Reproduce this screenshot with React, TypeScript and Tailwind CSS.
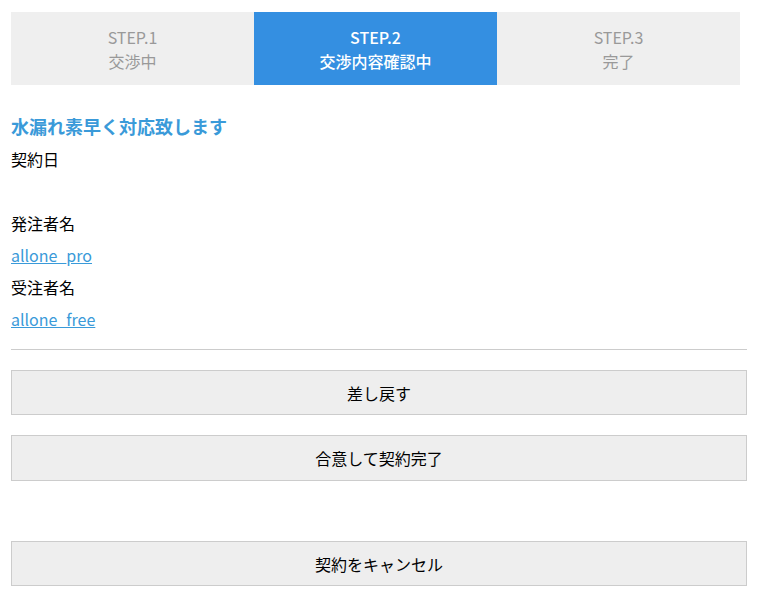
const steps = [
  { no: "STEP.1", label: "交渉中", active: false },
  { no: "STEP.2", label: "交渉内容確認中", active: true },
  { no: "STEP.3", label: "完了", active: false },
];

function Field({ label, value }: { label: string; value?: string }) {
  return (
    <>
      <dt className="leading-6 mb-2 text-black">{label}</dt>
      <dd className="leading-6 mb-2 h-6">
        {value && (
          <a href="#" className="text-[#3a9ad9] underline">
            {value}
          </a>
        )}
      </dd>
    </>
  );
}

export default function App() {
  return (
    <div
      className="bg-white min-h-[610px] px-[11px] pt-[12px] pr-[10px] text-[16px]"
      style={{ fontFamily: '"Noto Sans CJK JP", "Noto Sans", sans-serif' }}
    >
      {/* step indicator */}
      <div className="grid grid-cols-3 mr-[7px]">
        {steps.map(s => (
          <div
            key={s.no}
            className={`h-[73px] flex flex-col items-center justify-center leading-6 ${
              s.active ? "bg-[#348fe1] text-white font-medium" : "bg-[#efefef] text-[#999999]"
            }`}
          >
            <span>{s.no}</span>
            <span>{s.label}</span>
          </div>
        ))}
      </div>

      <h2 className="mt-[28px] text-[18px] font-bold leading-[27px] text-[#3a9ad9] mb-[7px]">
        水漏れ素早く対応致します
      </h2>

      <dl>
        <dt className="leading-6 mb-2 text-black">契約日</dt>
        <dd className="h-6 mb-2" />
        <Field label="発注者名" value="allone_pro" />
        <Field label="受注者名" value="allone_free" />
      </dl>

      <div className="border-t border-[#cccccc] mt-[18px]" />

      <div className="mt-[20px] flex flex-col">
        <button className="h-[45px] bg-[#eeeeee] border border-[#cccccc] text-black">差し戻す</button>
        <button className="h-[46px] mt-[20px] bg-[#eeeeee] border border-[#cccccc] text-black">
          合意して契約完了
        </button>
        <button className="h-[45px] mt-[60px] bg-[#eeeeee] border border-[#cccccc] text-black">
          契約をキャンセル
        </button>
      </div>
    </div>
  );
}
